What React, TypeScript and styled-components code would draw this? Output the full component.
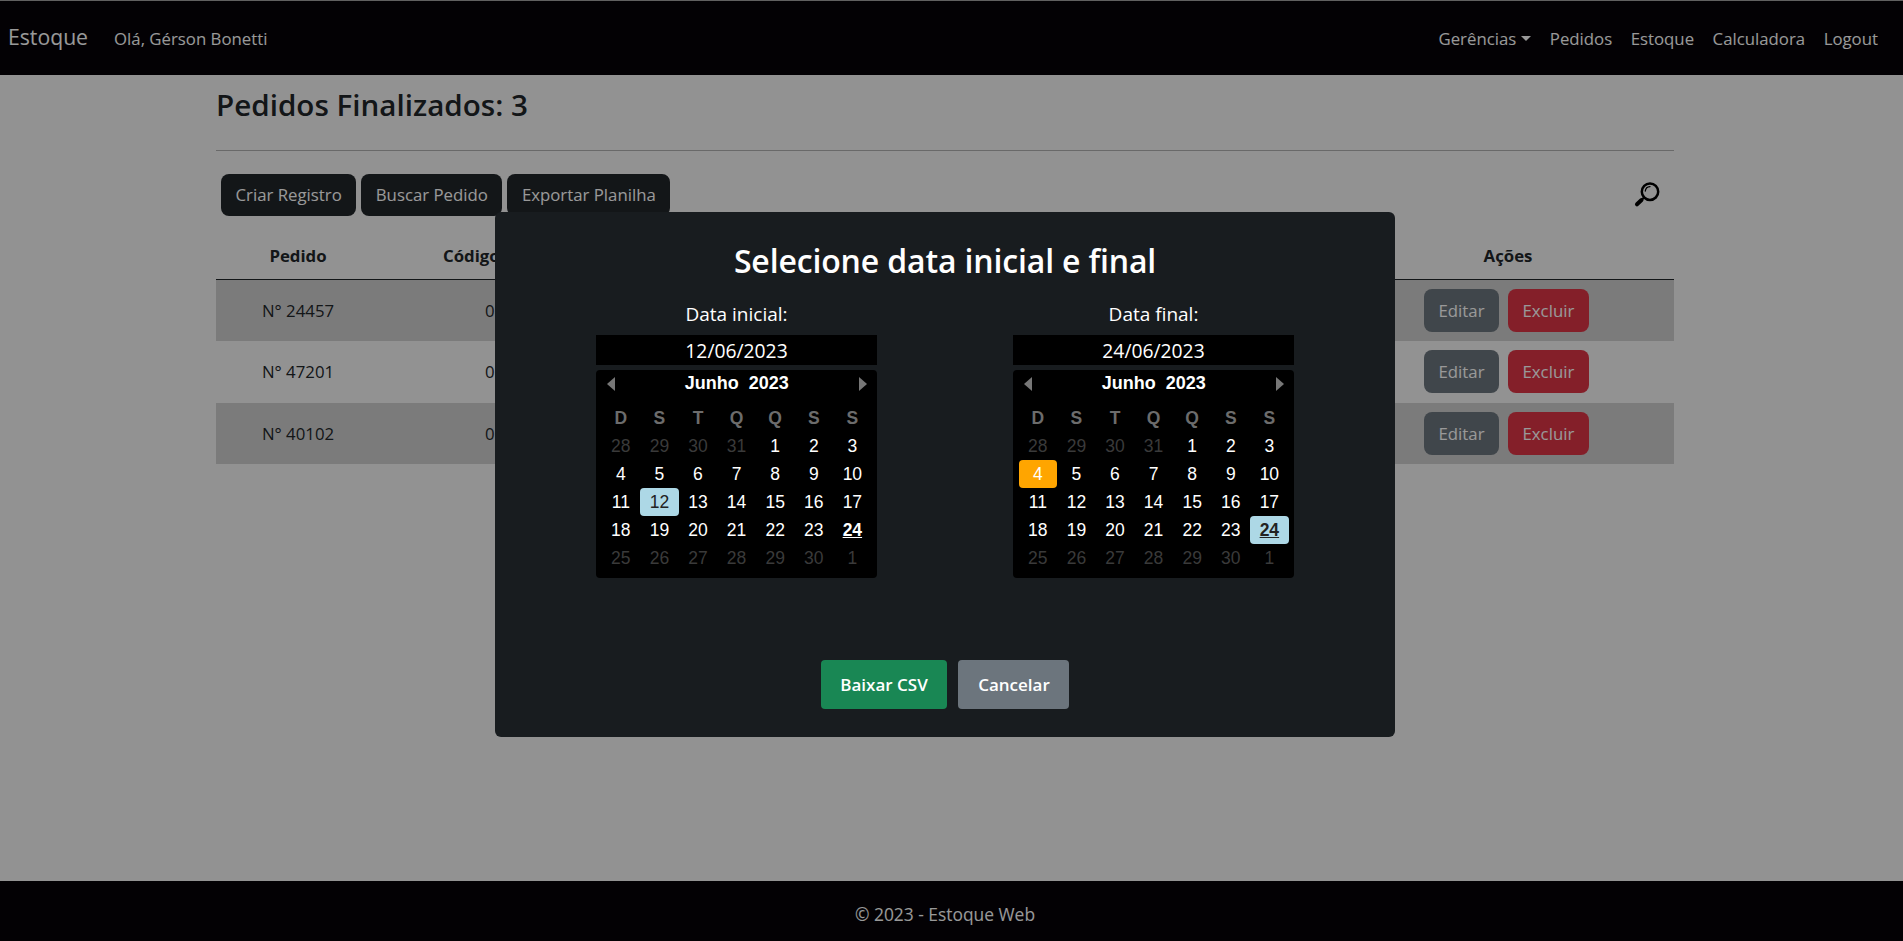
import React from "react";
import styled, { createGlobalStyle } from "styled-components";

const UI = `"Open Sans", "Noto Sans", sans-serif`;
const CAL = `"Liberation Sans", Arial, sans-serif`;

const Global = createGlobalStyle`
  html, body { margin: 0; padding: 0; height: 100%; }
  body { background: #f4f4f4; font-family: ${UI}; color: #212529; overflow: hidden; }
  * { box-sizing: border-box; }
`;

const Page = styled.div`
  height: 941px;
  display: flex;
  flex-direction: column;
`;

const Navbar = styled.nav`
  height: 75px;
  flex: none;
  background: #050307;
  border-top: 1px solid #a0a0a0;
  display: flex;
  align-items: center;
  padding: 0 25px 0 8px;
`;
const Brand = styled.span`
  font-size: 21.2px;
  color: #fff;
  margin-right: 26px;
  position: relative;
  top: -2px;
`;
const Greeting = styled.span`
  font-size: 16.8px;
  color: #fff;
`;
const NavLinks = styled.div`
  margin-left: auto;
  display: flex;
  gap: 18.5px;
`;
const NavLink = styled.span`
  font-size: 16.8px;
  color: #fff;
  display: inline-flex;
  align-items: center;
`;
const Caret = styled.i`
  display: inline-block;
  margin-left: 5px;
  border-top: 5px solid #fff;
  border-left: 5px solid transparent;
  border-right: 5px solid transparent;
`;

const Main = styled.main`
  flex: 1;
  width: 1458px;
  margin-left: 216px;
`;
const Title = styled.h3`
  margin: 0;
  height: 76px;
  padding-top: 8px;
  font-size: 29.6px;
  line-height: 44px;
  font-weight: 560;
  color: #212529;
  border-bottom: 1px solid #b0b0b0;
`;
const Toolbar = styled.div`
  display: flex;
  align-items: flex-start;
  gap: 5px;
  padding: 23px 14px 0 5px;
  height: 104px;
`;
const ToolButton = styled.span`
  background: #212529;
  color: #fff;
  border-radius: 8px;
  height: 42px;
  padding: 0 14.5px 2px;
  font-size: 16.8px;
  display: inline-flex;
  align-items: center;
`;
const SearchIcon = styled.svg`
  margin-left: auto;
  margin-top: 8px;
  width: 26px;
  height: 26px;
`;

const Row = styled.div<{ $stripe?: boolean }>`
  display: grid;
  grid-template-columns: 164px 1fr 332px;
  align-items: center;
  height: 61.3px;
  background: ${(p) => (p.$stripe ? "#cecece" : "transparent")};
`;
const HeadRow = styled(Row)`
  align-items: start;
  height: 25px;
  border-bottom: 1.5px solid #212529;
`;
const HeadCell = styled.div<{ $offset?: number }>`
  font-size: 16.8px;
  line-height: 20px;
  font-weight: 700;
  color: #212529;
  text-align: ${(p) => (p.$offset ? "left" : "center")};
  padding-left: ${(p) => p.$offset || 0}px;
  margin-top: -9px;
`;
const Cell = styled.div<{ $offset?: number }>`
  font-size: 16.8px;
  color: #212529;
  text-align: ${(p) => (p.$offset ? "left" : "center")};
  padding-left: ${(p) => p.$offset || 0}px;
`;
const Actions = styled.div`
  display: flex;
  gap: 9px;
  padding-left: 82px;
`;
const ActionButton = styled.span<{ $danger?: boolean }>`
  background: ${(p) => (p.$danger ? "#dc3545" : "#6c757d")};
  color: #fff;
  height: 43px;
  border-radius: 8px;
  padding: 0 14.5px;
  font-size: 16.8px;
  display: inline-flex;
  align-items: center;
`;

const Footer = styled.footer`
  height: 60px;
  flex: none;
  background: #050307;
  color: #fff;
  font-size: 17.4px;
  display: flex;
  align-items: center;
  justify-content: center;
  padding: 8px 13px 3px 0;
`;

const Overlay = styled.div`
  position: fixed;
  inset: 0;
  padding-right: 13px;
  background: rgba(0, 0, 0, 0.4);
  display: flex;
  justify-content: center;
  align-items: flex-start;
`;
const Modal = styled.div`
  width: 900px;
  height: 525px;
  margin-top: 212px;
  background: #181c1f;
  border-radius: 6px;
  padding: 0 33px;
  color: #fff;
  display: flex;
  flex-direction: column;
`;
const ModalTitle = styled.h2`
  margin: 0;
  height: 88px;
  padding-top: 26px;
  text-align: center;
  font-size: 32px;
  line-height: 46px;
  font-weight: 600;
  letter-spacing: -0.15px;
`;
const Columns = styled.div`
  display: grid;
  grid-template-columns: 1fr 1fr;
`;
const Column = styled.div`
  display: flex;
  flex-direction: column;
  align-items: center;
`;
const Label = styled.label`
  font-size: 19px;
  line-height: 28px;
  height: 35px;
`;
const DateInput = styled.div`
  width: 281px;
  height: 30px;
  padding-top: 1px;
  background: #000;
  text-align: center;
  font-size: 19.3px;
  line-height: 29px;
`;
const Calendar = styled.div`
  width: 281px;
  height: 208px;
  margin-top: 5px;
  background: #000;
  border-radius: 4px;
  padding: 0 5px 0 5.5px;
  font-family: ${CAL};
`;
const CalHeader = styled.div`
  height: 27px;
  display: flex;
  align-items: center;
  justify-content: space-between;
  padding: 0 5px;
  font-size: 18px;
  font-weight: 700;
  white-space: pre;
`;
const Arrow = styled.i<{ $right?: boolean }>`
  display: block;
  margin-top: 1px;
  border-top: 7px solid transparent;
  border-bottom: 7px solid transparent;
  ${(p) => (p.$right ? "border-left: 8px solid #777;" : "border-right: 8px solid #777;")}
`;
const DayGrid = styled.div`
  display: grid;
  grid-template-columns: repeat(7, 38.6px);
  grid-auto-rows: 28px;
  margin-top: 7px;
`;
const WeekDay = styled.div`
  text-align: center;
  line-height: 28px;
  font-size: 17.5px;
  font-weight: 700;
  color: #6c6c6c;
`;
const Day = styled.div<{ $muted?: boolean; $selected?: boolean; $holiday?: boolean; $today?: boolean }>`
  text-align: center;
  line-height: 28px;
  font-size: 17.5px;
  border-radius: 4px;
  color: ${(p) => (p.$selected ? "#222" : p.$muted ? "#3a3a3a" : "#fff")};
  background: ${(p) => (p.$selected ? "#add8e6" : p.$holiday ? "#ffa500" : "transparent")};
  ${(p) => p.$today && "font-weight: 700; text-decoration: underline;"}
`;
const ModalButtons = styled.div`
  margin-top: 82px;
  display: flex;
  justify-content: center;
  gap: 11px;
`;
const ModalButton = styled.span<{ $primary?: boolean }>`
  height: 49px;
  padding: 0 19.7px;
  border-radius: 4px;
  background: ${(p) => (p.$primary ? "#198754" : "#6c757d")};
  color: #fff;
  font-size: 17px;
  font-weight: 600;
  display: inline-flex;
  align-items: center;
`;

const orders = ["24457", "47201", "40102"];
const weekDays = ["D", "S", "T", "Q", "Q", "S", "S"];
const before = [28, 29, 30, 31];
const after = [25, 26, 27, 28, 29, 30, 1];
const june = Array.from({ length: 24 }, (_, i) => i + 1);

function DatePicker({ label, value, selected, holiday }: { label: string; value: string; selected: number; holiday?: number }) {
  return (
    <Column>
      <Label>{label}</Label>
      <DateInput>{value}</DateInput>
      <Calendar>
        <CalHeader>
          <Arrow />
          <span>Junho  2023</span>
          <Arrow $right />
        </CalHeader>
        <DayGrid>
          {weekDays.map((d, i) => (
            <WeekDay key={i}>{d}</WeekDay>
          ))}
          {before.map((d) => (
            <Day key={`b${d}`} $muted>{d}</Day>
          ))}
          {june.map((d) => (
            <Day key={d} $selected={d === selected} $holiday={d === holiday} $today={d === 24}>{d}</Day>
          ))}
          {after.map((d, i) => (
            <Day key={`a${i}`} $muted>{d}</Day>
          ))}
        </DayGrid>
      </Calendar>
    </Column>
  );
}

export default function App() {
  return (
    <>
      <Global />
      <Page>
        <Navbar>
          <Brand>Estoque</Brand>
          <Greeting>Olá, Gérson Bonetti</Greeting>
          <NavLinks>
            <NavLink>Gerências<Caret /></NavLink>
            <NavLink>Pedidos</NavLink>
            <NavLink>Estoque</NavLink>
            <NavLink>Calculadora</NavLink>
            <NavLink>Logout</NavLink>
          </NavLinks>
        </Navbar>
        <Main>
          <Title>Pedidos Finalizados: 3</Title>
          <Toolbar>
            <ToolButton>Criar Registro</ToolButton>
            <ToolButton>Buscar Pedido</ToolButton>
            <ToolButton>Exportar Planilha</ToolButton>
            <SearchIcon viewBox="0 0 26 26" fill="none" stroke="#000">
              <circle cx="16" cy="9.7" r="8.2" strokeWidth="2.5" />
              <path d="M11.3 9a5 5 0 0 1 4.7-4.4" strokeWidth="1.3" strokeLinecap="round" />
              <path d="M10 15.5 L7.5 18" strokeWidth="2" />
              <path d="M7.5 18 L3 22.3" strokeWidth="4" strokeLinecap="round" />
            </SearchIcon>
          </Toolbar>
          <HeadRow>
            <HeadCell>Pedido</HeadCell>
            <HeadCell $offset={63}>Código</HeadCell>
            <HeadCell>Ações</HeadCell>
          </HeadRow>
          {orders.map((o, i) => (
            <Row key={o} $stripe={i % 2 === 0}>
              <Cell>N° {o}</Cell>
              <Cell $offset={105}>0</Cell>
              <Actions>
                <ActionButton>Editar</ActionButton>
                <ActionButton $danger>Excluir</ActionButton>
              </Actions>
            </Row>
          ))}
        </Main>
        <Footer>© 2023 - Estoque Web</Footer>
      </Page>
      <Overlay>
        <Modal>
          <ModalTitle>Selecione data inicial e final</ModalTitle>
          <Columns>
            <DatePicker label="Data inicial:" value="12/06/2023" selected={12} />
            <DatePicker label="Data final:" value="24/06/2023" selected={24} holiday={4} />
          </Columns>
          <ModalButtons>
            <ModalButton $primary>Baixar CSV</ModalButton>
            <ModalButton>Cancelar</ModalButton>
          </ModalButtons>
        </Modal>
      </Overlay>
    </>
  );
}
